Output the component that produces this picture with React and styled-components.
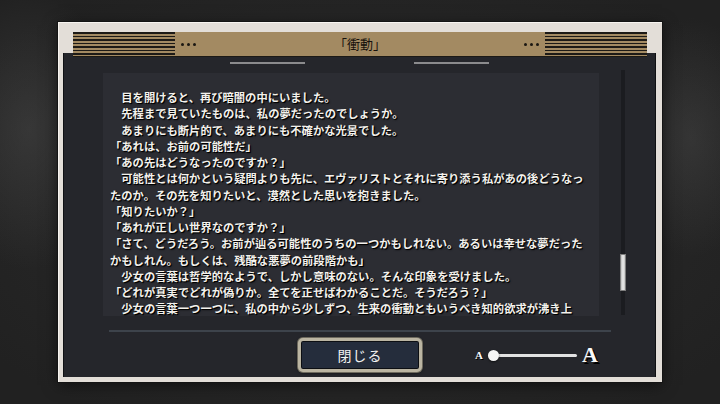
import React from 'react'
import styled, { createGlobalStyle } from 'styled-components'

const GlobalStyle = createGlobalStyle`
html, body {
  margin: 0;
  padding: 0;
}
body {
  background: #252525;
  font-family: "Noto Sans CJK JP", "Noto Sans", sans-serif;
}
`;

const Screen = styled.div`
width: 720px;
height: 404px;
box-sizing: border-box;
padding-top: 22px;
display: flex;
justify-content: center;
align-items: flex-start;
overflow: hidden;
background:
  radial-gradient(ellipse 90px 140px at 4% 32%, rgba(78,78,78,.45), transparent 100%),
  radial-gradient(ellipse 70px 120px at 96% 34%, rgba(78,78,78,.4), transparent 100%),
  radial-gradient(ellipse at 50% 50%, #2d2d2d, #212121 90%);
`;

const Frame = styled.div`
width: 604px;
height: 360px;
box-sizing: border-box;
background: #e3ded8;
padding: 10px 6px 5px 5px;
display: flex;
flex-direction: column;
box-shadow: inset 1px 1px 0 #f7f4f0, 0 0 0 1px #141414, 0 3px 14px rgba(0,0,0,.55);
`;

const Header = styled.div`
position: relative;
z-index: 1;
height: 25px;
margin: 0 9px -4px 10px;
background: #a38a62;
border-bottom: 1px solid #1c1a16;
box-sizing: border-box;
display: grid;
grid-template-columns: 102px auto 1fr auto 102px;
align-items: center;
`;

const Stripes = styled.div`
height: 100%;
background: repeating-linear-gradient(to bottom, #1d1a16 0 1.6px, #a38a62 1.6px 3.57px);
`;

const Dots = styled.div`
display: flex;
gap: 3px;
margin: 0 6px;
span {
  width: 3px;
  height: 3px;
  border-radius: 50%;
  background: #1a1712;
}
`;

const Title = styled.div`
text-align: center;
font-size: 13px;
color: #17120c;
line-height: 24px;
`;

const Panel = styled.div`
flex: 1;
background: #25262b;
border-left: 1px solid #101114;
border-right: 1px solid #0f1012;
padding-top: 9px;
display: flex;
flex-direction: column;
`;

const Tabs = styled.div`
display: flex;
justify-content: center;
gap: 109px;
span {
  width: 75px;
  height: 2px;
  background: #8b8b8d;
}
`;

const Body = styled.div`
display: flex;
align-items: flex-start;
margin: 6px 0 0 39px;
`;

const TextBox = styled.div`
width: 496px;
height: 243px;
margin: 3px 0 -3px;
box-sizing: border-box;
padding: 16px 0 0 7px;
background: #2c2d33;
overflow: hidden;
`;

const Para = styled.p`
margin: 0;
font-size: 11.3px;
line-height: 16.25px;
font-weight: 700;
color: #f3f1ec;
white-space: nowrap;
text-shadow: 1px 1px 0 #000, 1px 1px 2px rgba(0,0,0,.8);
`;

const ScrollTrack = styled.div`
position: relative;
width: 4px;
height: 245px;
margin-left: 22px;
background: #1b1c20;
`;

const ScrollThumb = styled.div`
position: absolute;
left: -1px;
top: ${p => p.$top}px;
width: 6px;
height: ${p => p.$size}px;
box-sizing: border-box;
border: 1px solid #7d7d7d;
background: linear-gradient(to right, #bdbdbd, #ececec 50%, #c4c4c4);
`;

const Separator = styled.div`
width: 502px;
height: 2px;
margin: 15px 0 0 45px;
background: #3d434b;
`;

const Footer = styled.div`
display: flex;
align-items: center;
margin-top: 6px;
padding-left: 234px;
`;

const CloseButton = styled.button`
width: 124px;
height: 34px;
box-sizing: border-box;
border-radius: 5px;
border: 3px solid #bbb5a2;
background: #252d3c;
box-shadow: inset 0 0 0 1px #0d0f13, 0 0 0 1px #6e6a5e, 0 1px 3px rgba(0,0,0,.6);
color: #f2f2f2;
font-family: "Noto Sans CJK JP", "Noto Sans", sans-serif;
font-size: 14px;
letter-spacing: 1px;
padding: 0;
cursor: pointer;
`;

const SizeControl = styled.div`
display: flex;
align-items: center;
margin-left: 53px;
`;

const Glyph = styled.span`
font-family: "Liberation Serif", "DejaVu Serif", serif;
font-weight: 700;
font-size: ${p => p.$size}px;
line-height: 1;
color: #fafafa;
text-shadow: ${p => p.$size > 15 ? '2px 2px 0 #000' : '1px 1px 0 #000'};
`;

const Track = styled.div`
position: relative;
width: 89px;
height: 3px;
margin: 0 5px;
border-radius: 2px;
background: #e2e2e2;
`;

const Knob = styled.div`
position: absolute;
left: 0;
top: -4px;
width: 11px;
height: 11px;
border-radius: 50%;
background: #f5f5f5;
box-shadow: 0 1px 2px rgba(0,0,0,.6);
`;

const paragraphs = [
  ['　目を開けると、再び暗闇の中にいました。'],
  ['　先程まで見ていたものは、私の夢だったのでしょうか。'],
  ['　あまりにも断片的で、あまりにも不確かな光景でした。'],
  ['「あれは、お前の可能性だ」'],
  ['「あの先はどうなったのですか？」'],
  ['　可能性とは何かという疑問よりも先に、エヴァリストとそれに寄り添う私があの後どうなっ', 'たのか。その先を知りたいと、漠然とした思いを抱きました。'],
  ['「知りたいか？」'],
  ['「あれが正しい世界なのですか？」'],
  ['「さて、どうだろう。お前が辿る可能性のうちの一つかもしれない。あるいは幸せな夢だった', 'かもしれん。もしくは、残酷な悪夢の前段階かも」'],
  ['　少女の言葉は哲学的なようで、しかし意味のない。そんな印象を受けました。'],
  ['「どれが真実でどれが偽りか。全てを正せばわかることだ。そうだろう？」'],
  ['　少女の言葉一つ一つに、私の中から少しずつ、生来の衝動ともいうべき知的欲求が沸き上'],
];

function Ellipsis() {
  return <Dots><span /><span /><span /></Dots>;
}

export default function App() {
  return (
    <>
      <GlobalStyle />
      <Screen>
        <Frame>
          <Header>
            <Stripes />
            <Ellipsis />
            <Title>「衝動」</Title>
            <Ellipsis />
            <Stripes />
          </Header>
          <Panel>
            <Tabs><span /><span /></Tabs>
            <Body>
              <TextBox>
                {paragraphs.map((lines, i) => (
                  <Para key={i}>
                    {lines.map((l, j) => (
                      <React.Fragment key={j}>{j > 0 && <br />}{l}</React.Fragment>
                    ))}
                  </Para>
                ))}
              </TextBox>
              <ScrollTrack>
                <ScrollThumb $top={184} $size={37} />
              </ScrollTrack>
            </Body>
            <Separator />
            <Footer>
              <CloseButton>閉じる</CloseButton>
              <SizeControl>
                <Glyph $size={11}>A</Glyph>
                <Track><Knob /></Track>
                <Glyph $size={22}>A</Glyph>
              </SizeControl>
            </Footer>
          </Panel>
        </Frame>
      </Screen>
    </>
  )
}
